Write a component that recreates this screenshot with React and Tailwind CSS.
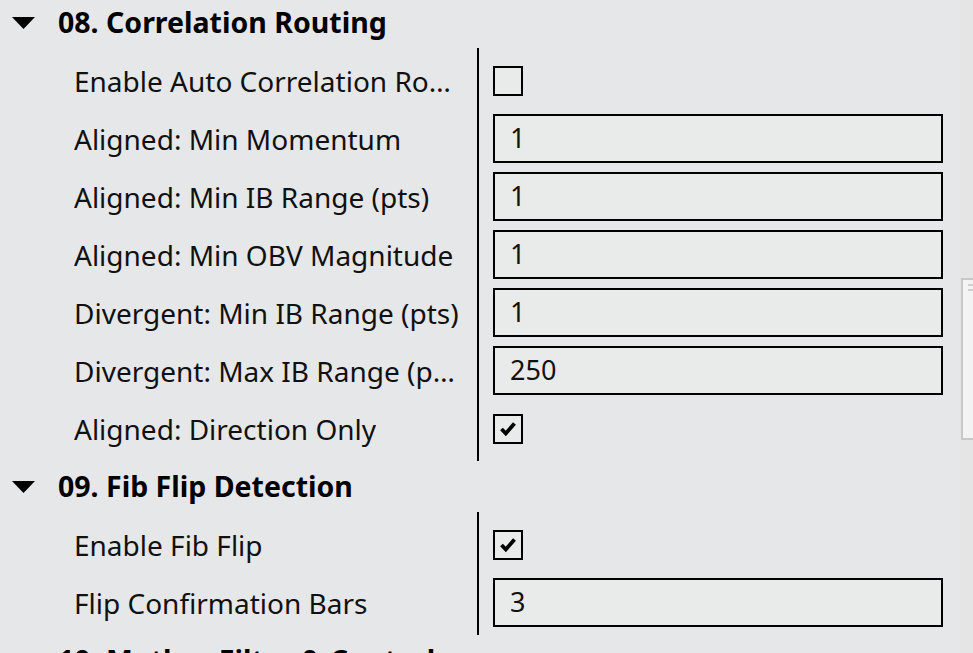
import React from 'react';

const sections = [
  {
    title: '08. Correlation Routing',
    rows: [
      { label: 'Enable Auto Correlation Routing', type: 'check', value: false },
      { label: 'Aligned: Min Momentum', type: 'text', value: '1' },
      { label: 'Aligned: Min IB Range (pts)', type: 'text', value: '1' },
      { label: 'Aligned: Min OBV Magnitude', type: 'text', value: '1' },
      { label: 'Divergent: Min IB Range (pts)', type: 'text', value: '1' },
      { label: 'Divergent: Max IB Range (pts)', type: 'text', value: '250' },
      { label: 'Aligned: Direction Only', type: 'check', value: true },
    ],
  },
  {
    title: '09. Fib Flip Detection',
    rows: [
      { label: 'Enable Fib Flip', type: 'check', value: true },
      { label: 'Flip Confirmation Bars', type: 'text', value: '3' },
    ],
  },
  {
    title: '10. Mother Filter & Control',
    rows: [],
  },
];

function Caret() {
  return (
    <svg width="23" height="12" viewBox="0 0 23 12" className="shrink-0">
      <path d="M0 0 L23 0 L11.5 12 Z" fill="#000" />
    </svg>
  );
}

function CheckBox({ checked }) {
  return (
    <div className="w-[30px] h-[30px] border-2 border-black bg-[#e9ebea] flex items-center justify-center">
      {checked && (
        <svg width="18" height="16" viewBox="0 0 18 16">
          <path d="M2.5 8 L6.8 12.5 L15.5 2.5" fill="none" stroke="#000" strokeWidth="3.8" />
        </svg>
      )}
    </div>
  );
}

function Field({ value }) {
  return (
    <div className="h-[49px] w-full border-2 border-black bg-[#e9ebea] flex items-center pl-[15px] text-[27px] text-[#111]">
      {value}
    </div>
  );
}

function Section({ title, rows }) {
  return (
    <div>
      <div className="h-[51px] flex items-center pl-[12px]">
        <Caret />
        <span className="ml-[23px] text-[28.5px] font-bold text-black leading-none whitespace-nowrap">{title}</span>
      </div>
      {rows.length > 0 && (
        <div className="flex">
          <div className="w-[477px] pl-[74px] pr-[15px] py-2 flex flex-col gap-[9px]">
            {rows.map((r) => (
              <div key={r.label} className="h-[49px] flex items-center min-w-0">
                <span className="block truncate text-[28px] text-[#111]">{r.label}</span>
              </div>
            ))}
          </div>
          <div className="flex-1 border-l-2 border-black pl-[14px] pr-[17px] py-2 flex flex-col gap-[9px]">
            {rows.map((r) => (
              <div key={r.label} className="h-[49px] flex items-center">
                {r.type === 'check' ? <CheckBox checked={r.value} /> : <Field value={r.value} />}
              </div>
            ))}
          </div>
        </div>
      )}
    </div>
  );
}

export default function App() {
  return (
    <div className="w-[973px] h-[653px] overflow-hidden bg-[#e6e7e9] flex font-['Noto_Sans',sans-serif]">
      <div className="w-[960px] shrink-0 -mt-[3px]">
        {sections.map((s) => (
          <Section key={s.title} {...s} />
        ))}
      </div>
      <div className="flex-1 bg-[#e5e5e5] pt-[278px] pl-[1px]">
        <div className="h-[162px] border-2 border-r-0 border-[#c8c8c8] bg-[#f3f3f3] pt-[4px] pl-[5px] flex flex-col gap-[3px]">
          <div className="h-[2px] w-full bg-[#d0d0d0]" />
          <div className="h-[2px] w-full bg-[#d0d0d0]" />
        </div>
      </div>
    </div>
  );
}
